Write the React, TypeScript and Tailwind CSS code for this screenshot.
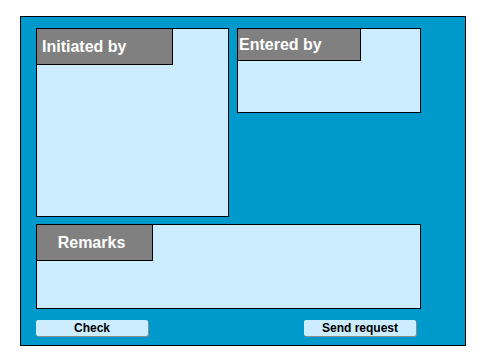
const Panel = ({
  title,
  className,
  headerClassName,
}: {
  title: string;
  className: string;
  headerClassName: string;
}) => (
  <div className={`border border-black bg-[#ccecff] ${className}`}>
    <div
      className={`flex items-center border-r border-b border-black bg-[#808080] text-[16px] font-bold text-white ${headerClassName}`}
    >
      {title}
    </div>
  </div>
);

const Button = ({ label }: { label: string }) => (
  <button className="flex h-[16px] w-[112px] items-center justify-center rounded-[2px] bg-[#ccecff] text-[12px] font-bold leading-none text-black shadow-[1px_1px_0_#8c8c8c]">
    {label}
  </button>
);

export default function App() {
  return (
    <div className="h-[359px] w-[479px] bg-white pl-[20px] pt-[16px] font-['Liberation_Sans',Arial,sans-serif]">
      <div className="flex h-[330px] w-[446px] flex-col border border-black bg-[#0099cc] pl-[15px] pt-[11px]">
        <div className="flex gap-[8px]">
          <Panel
            title="Initiated by"
            className="h-[189px] w-[193px]"
            headerClassName="h-[36px] w-[136px] pl-[5px]"
          />
          <Panel
            title="Entered by"
            className="h-[85px] w-[184px]"
            headerClassName="h-[32px] w-[123px] pl-[1px]"
          />
        </div>
        <Panel
          title="Remarks"
          className="mt-[7px] h-[85px] w-[385px]"
          headerClassName="h-[36px] w-[116px] justify-center pr-[6px]"
        />
        <div className="mt-[11px] flex w-[380px] justify-between">
          <Button label="Check" />
          <Button label="Send request" />
        </div>
      </div>
    </div>
  );
}
